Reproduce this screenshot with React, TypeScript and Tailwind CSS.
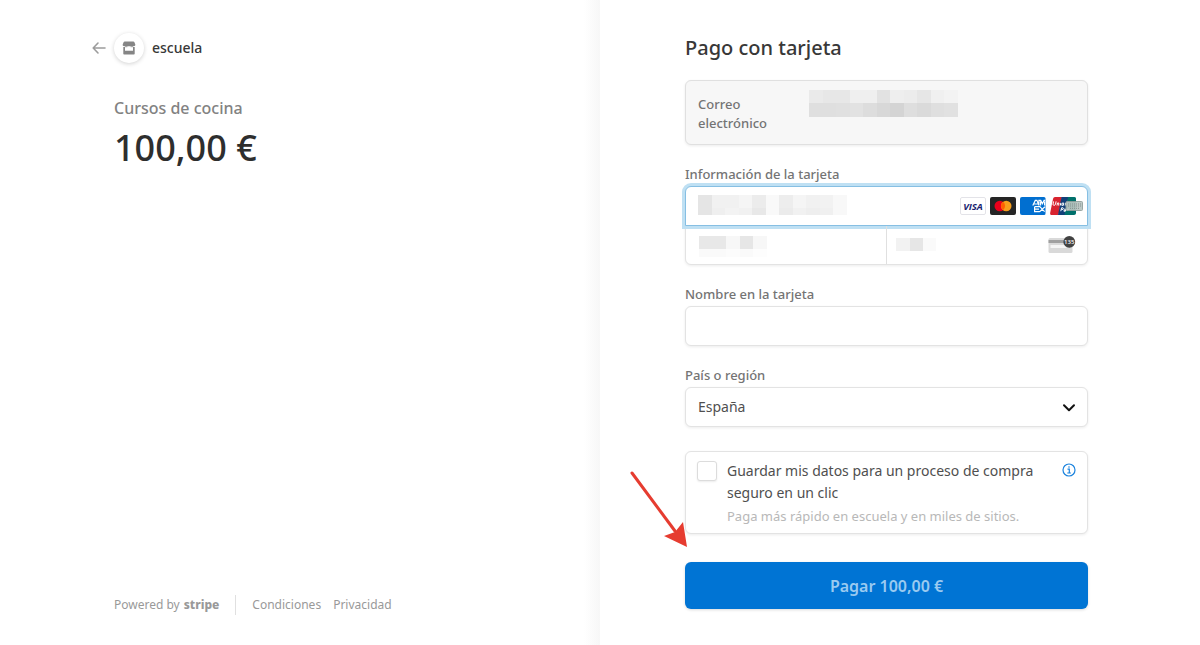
import type { ReactNode } from "react";

const BOX =
  "rounded-md border border-[#e3e3e3] bg-white shadow-[0_1px_3px_rgba(0,0,0,0.08)]";
const LABEL = "block text-[13px] leading-5 font-medium text-[#747474]";

type MosaicProps = {
  rows: string[][];
  cell: number;
  heights: number[];
  className?: string;
};

function Mosaic({ rows, cell, heights, className }: MosaicProps) {
  const width = Math.max(...rows.map((r) => r.length)) * cell;
  const height = heights.reduce((a, b) => a + b, 0);
  return (
    <svg
      aria-hidden="true"
      width={width}
      height={height}
      shapeRendering="crispEdges"
      className={className}
    >
      {rows.map((row, y) =>
        row.map((fill, x) => (
          <rect
            key={`${y}-${x}`}
            x={x * cell}
            y={heights.slice(0, y).reduce((a, b) => a + b, 0)}
            width={cell}
            height={heights[y]}
            fill={fill}
          />
        )),
      )}
    </svg>
  );
}

function StoreIcon() {
  return (
    <svg width="14" height="14" viewBox="0 0 14 14" fill="#858585" aria-hidden="true">
      <path d="M2.600 0.500h8.800c.4 0 .7.200.9.600L13.300 3.500c.2 1-.5 1.700-1.500 1.700H2.200C1.200 5.200.5 4.500.7 3.500l1-2.400c.2-.4.500-.6.900-.6z" />
      <path d="M1.300 6.100h1.700v3.600h8V6.100h1.700v6.400c0 .6-.4 1-1 1H2.300c-.6 0-1-.4-1-1z" />
      <path d="M3 5h2.400v1.200H3zM8.600 5H11v1.200H8.600z" opacity=".6" />
    </svg>
  );
}

function Visa() {
  return (
    <svg width="26" height="18" viewBox="0 0 26 18" role="img" aria-label="Visa">
      <rect x="0.5" y="0.5" width="25" height="17" rx="1.500" fill="#fff" stroke="#e3e3e8" />
      <text x="13" y="12.600" textAnchor="middle" fontFamily="Open Sans, sans-serif" fontSize="9.500" fontWeight="700" fontStyle="italic" fill="#1a1f71">VISA</text>
    </svg>
  );
}

function Mastercard() {
  return (
    <svg width="26" height="18" viewBox="0 0 26 18" role="img" aria-label="Mastercard">
      <rect width="26" height="18" rx="2" fill="#252525" />
      <circle cx="9.800" cy="9" r="5.300" fill="#eb001b" />
      <circle cx="16.200" cy="9" r="5.300" fill="#f79e1b" />
      <path d="M13 4.800a5.300 5.300 0 0 1 0 8.400 5.300 5.300 0 0 1 0-8.400z" fill="#ff5f00" />
    </svg>
  );
}

function Amex() {
  return (
    <svg width="26" height="18" viewBox="0 0 26 18" role="img" aria-label="American Express">
      <path d="M2 0h22a1.500 1.500 0 0 1 1.500 1.500v15A1.500 1.500 0 0 1 24 18H2a2 2 0 0 1-2-2V2a2 2 0 0 1 2-2z" fill="#016fd0" />
      <path d="M12.800 8.400 15.300 3.400h1.600l2 5V3.400h1.800l1.700 3.200 1.700-3.200h1M14.200 7h4M20.600 8.400V4.600M24.600 8.400V4.600M14.600 9.700v4.900h5.200M14.600 12.200h4.400M14.600 9.700h5.200l4.800 4.900M24.900 9.700l-5.100 4.900" fill="none" stroke="#fff" strokeWidth="1.200" />
    </svg>
  );
}

function UnionPay() {
  return (
    <svg width="33" height="18" viewBox="0 0 33 18" role="img" aria-label="UnionPay">
      <path d="M5 0h7L8.500 18H2C.5 18-.1 17 .2 15.800L3 2C3.300.8 4 0 5 0z" fill="#d8232f" />
      <path d="M11.500 0h7L15 18H8z" fill="#123f78" />
      <path d="M18 0h6.500C25.500 0 26 .8 26 1.800V16c0 1.200-.8 2-2 2h-9.500z" fill="#00706b" />
      <g fill="none" stroke="#fff" strokeWidth="1" strokeLinejoin="round">
        <path d="M3.600 4.400 3 7.300q0 1 1.100 1t1.400-1l.6-2.900M7 8.500l.5-2.500h1.400l-.3 2.500M10.300 8.500l.5-2.600M12.200 6.100h1.600l-.4 2.200h-1.600zM15.200 8.500l.5-2.500h1.400l-.4 2.500" />
        <path d="M10.800 14.200 11.600 10.800h1.500q.8.900-.2 1.700h-1.500M14.200 12.200h1.600l-.4 2h-1.500l.2-1h1.500M17.200 12l.3 1.900 1.300-1.900" />
      </g>
      <rect x="16" y="4.500" width="16.500" height="9" rx="1" fill="#b9c4c1" stroke="#93a09d" opacity=".93" />
      <path d="M18 7h13M18 9h13M20 11.300h9" stroke="#82908d" strokeWidth="1" strokeDasharray="1 1" />
    </svg>
  );
}

function CvcIcon() {
  return (
    <svg width="28" height="18" viewBox="0 0 28 18" aria-hidden="true">
      <rect x="0.500" y="2" width="24" height="15" rx="1.500" fill="#d9d9d9" />
      <rect x="0.500" y="4" width="24" height="3" fill="#a0a0a0" />
      <rect x="2.500" y="9" width="16" height="3" fill="#f5f5f5" />
      <circle cx="21.300" cy="5.900" r="5.900" fill="#424242" />
      <text x="21.200" y="8.100" textAnchor="middle" fontFamily="Open Sans, sans-serif" fontSize="6" fontWeight="600" fill="#fff">135</text>
    </svg>
  );
}

function Field({ id, label, children }: { id: string; label: string; children: ReactNode }) {
  return (
    <div>
      <label htmlFor={id} className={LABEL}>
        {label}
      </label>
      <div className="relative mt-0.5">{children}</div>
    </div>
  );
}

function Summary() {
  return (
    <section className="flex justify-end bg-[linear-gradient(to_left,#f7f7f7,#fff_16px)] pr-[84px]">
      <div className="flex w-full max-w-[402px] flex-col pt-8 pb-[30px]">
        <header className="-ml-[22px] flex h-8 items-center">
          <a href="#volver" aria-label="Volver">
            <svg width="14" height="14" viewBox="0 0 14 14" fill="none" stroke="#9c9c9c" strokeWidth="1.600" strokeLinecap="round" strokeLinejoin="round" aria-hidden="true">
              <path d="M13 7H1.500M6 2 1.200 7 6 12" />
            </svg>
          </a>
          <span className="ml-2 flex size-[30px] items-center justify-center rounded-full bg-white shadow-[0_1px_4px_rgba(0,0,0,0.18)]">
            <StoreIcon />
          </span>
          <span className="ml-2 text-sm font-medium text-[#383838]">escuela</span>
        </header>
        <h1 className="mt-8 text-base leading-6 font-medium text-[#828282]">Cursos de cocina</h1>
        <p className="mt-1 text-4xl leading-12 font-medium text-[#2e2e2e]">100,00 €</p>
        <footer className="mt-auto flex h-5 items-center text-xs text-[#999999]">
          <a href="#stripe" className="flex items-center">
            Powered by
            <span className="ml-1 text-xs font-extrabold">stripe</span>
          </a>
          <span className="mx-4 h-5 border-l border-[#e0e0e0]" />
          <a href="#condiciones">Condiciones</a>
          <a href="#privacidad" className="ml-3">
            Privacidad
          </a>
        </footer>
      </div>
    </section>
  );
}

function CardFields() {
  return (
    <fieldset>
      <legend className={LABEL}>Información de la tarjeta</legend>
      <div className={`${BOX} mt-0.5`}>
        <div className="relative -mx-px -mt-px">
          <input
            aria-label="Número de tarjeta"
            className="block h-10 w-full rounded-t-md border border-[#86bfe3] bg-white px-3 outline-none ring-3 ring-[#bfe0f3]"
          />
          <Mosaic
            className="pointer-events-none absolute top-[9px] left-[13px]"
            cell={13.5}
            heights={[13, 7]}
            rows={[
              ["#e5e5e5", "#f1f1f1", "#f1f1f1", "#f5f5f5", "#ececec", "#f9f9f9", "#ededed", "#f5f5f5", "#f1f1f1", "#f2f2f2", "#f8f8f8"],
              ["#e5e5e5", "#efefef", "#f3f3f3", "#f1f1f1", "#e8e8e8", "#f9f9f9", "#ebebeb", "#f1f1f1", "#eeeeee", "#f0f0f0", "#f8f8f8"],
            ]}
          />
          <div className="pointer-events-none absolute inset-y-0 right-[5px] flex items-center gap-1">
            <Visa />
            <Mastercard />
            <Amex />
            <UnionPay />
          </div>
        </div>
        <div className="grid h-[38px] grid-cols-2">
          <div className="relative border-r border-[#e0e0e0]">
            <input aria-label="Caducidad" className="block size-full rounded-bl-md px-3 outline-none" />
            <Mosaic
              className="pointer-events-none absolute top-[10px] left-[13px]"
              cell={13.5}
              heights={[13, 8]}
              rows={[
                ["#e8e8e8", "#e8e8e8", "#f7f7f7", "#e6e6e6", "#f7f7f7"],
                ["#fafafa", "#fafafa", "#fcfcfc", "#fafafa", "#fdfdfd"],
              ]}
            />
          </div>
          <div className="relative">
            <input aria-label="CVC" className="block size-full rounded-br-md px-3 outline-none" />
            <Mosaic
              className="pointer-events-none absolute top-[12px] left-[9px]"
              cell={13.5}
              heights={[13]}
              rows={[["#f2f2f2", "#e6e6e6", "#fafafa"]]}
            />
            <div className="pointer-events-none absolute inset-y-0 right-[11px] flex items-center">
              <CvcIcon />
            </div>
          </div>
        </div>
      </div>
    </fieldset>
  );
}

function SaveDetails() {
  return (
    <div className={`${BOX} relative mt-6 flex items-start px-[11px] pt-2 pb-[7px]`}>
      <input
        id="guardar"
        type="checkbox"
        className="mt-px size-5 shrink-0 appearance-none rounded-[3px] border border-[#dcdcdc] bg-white shadow-[0_1px_2px_rgba(0,0,0,0.08)] checked:bg-[#0074d4]"
      />
      <div className="ml-[10px] flex-1">
        <label htmlFor="guardar" className="block text-sm leading-[22px] text-[#4f4f4f]">
          Guardar mis datos para un proceso de compra seguro en un clic
        </label>
        <p className="mt-0.5 text-[13px] leading-5 text-[#b8b8b8]">
          Paga más rápido en escuela y en miles de sitios.
        </p>
      </div>
      <button type="button" aria-label="Más información" className="mt-[3px] ml-5">
        <svg width="14" height="14" viewBox="0 0 14 14" fill="none" stroke="#1a82dd" aria-hidden="true">
          <circle cx="7" cy="7" r="6" strokeWidth="1.200" />
          <path d="M5.500 6.200H7.300V10M5.300 10h3.600" strokeWidth="1.200" />
          <circle cx="7" cy="4" r="0.800" fill="#1a82dd" stroke="none" />
        </svg>
      </button>
      <svg
        aria-hidden="true"
        width="60"
        height="80"
        viewBox="0 0 60 80"
        className="pointer-events-none absolute top-[17px] -left-[57px]"
      >
        <path d="M3 4 46 62" stroke="#e63c30" strokeWidth="3" strokeLinecap="round" />
        <path d="M58 78 35 67 46 63 54 53z" fill="#e63c30" />
      </svg>
    </div>
  );
}

function Payment() {
  return (
    <section className="bg-white pl-[85px]">
      <form className="w-full max-w-[403px] pt-[34px] pb-9" onSubmit={(e) => e.preventDefault()}>
        <h2 className="text-xl leading-7 font-medium text-[#383838]">Pago con tarjeta</h2>
        <div className="mt-[18px] flex rounded-md border border-[#e0e0e0] bg-[#f7f7f7] px-3 pt-[9px] pb-[11px] shadow-[0_1px_3px_rgba(0,0,0,0.08)]">
          <span className="mt-[5px] w-[111px] text-[13px] leading-[19px] font-medium text-[#747474]">
            Correo electrónico
          </span>
          <Mosaic
            cell={13.5}
            heights={[13, 14]}
            rows={[
              ["#eaeaea", "#e7e7e7", "#e7e7e7", "#efefef", "#efefef", "#e2e2e2", "#eeeeee", "#ececec", "#e6e6e6", "#f0f0f0", "#f3f3f3"],
              ["#dfdfdf", "#dfdfdf", "#e0e0e0", "#e2e2e2", "#dddddd", "#d8d8d8", "#d4d4d4", "#dedede", "#dadada", "#dfdfdf", "#e1e1e1"],
            ]}
          />
        </div>
        <div className="mt-[19px] space-y-[19px]">
          <CardFields />
          <Field id="nombre" label="Nombre en la tarjeta">
            <input id="nombre" className={`${BOX} block h-10 w-full px-3 text-[15px] outline-none`} />
          </Field>
          <Field id="pais" label="País o región">
            <select
              id="pais"
              className={`${BOX} block h-10 w-full appearance-none px-3 text-sm text-[#4f4f4f] outline-none`}
            >
              <option>España</option>
            </select>
            <svg
              aria-hidden="true"
              width="14"
              height="10"
              viewBox="0 0 14 10"
              fill="none"
              stroke="#111"
              strokeWidth="2"
              strokeLinecap="round"
              strokeLinejoin="round"
              className="pointer-events-none absolute top-4 right-3"
            >
              <path d="M2 2.200 7 7.200 12 2.200" />
            </svg>
          </Field>
        </div>
        <SaveDetails />
        <button
          type="submit"
          className="mt-7 block h-[47px] w-full rounded-md bg-[#0074d4] pt-px text-base font-semibold text-[#9acaf0] shadow-[0_1px_3px_rgba(0,0,0,0.15)]"
        >
          Pagar 100,00 €
        </button>
      </form>
    </section>
  );
}

export default function App() {
  return (
    <main className="grid min-h-screen grid-cols-2 bg-white font-['Noto_Sans','Open_Sans',sans-serif]">
      <Summary />
      <Payment />
    </main>
  );
}
